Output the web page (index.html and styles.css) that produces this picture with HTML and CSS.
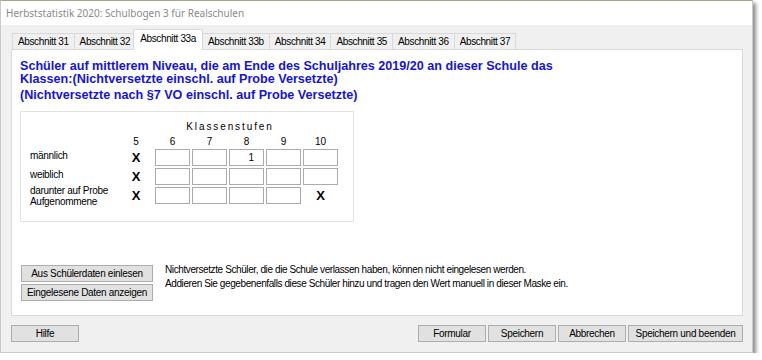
FILE: index.html
```html
<!doctype html>
<html lang="de">
  <head>
    <meta charset="UTF-8" />
    <title>Herbststatistik 2020: Schulbogen 3 für Realschulen</title>
    <link rel="stylesheet" href="styles.css">
  </head>
  <body>
    <div class="window">
      <div class="titlebar">Herbststatistik 2020: Schulbogen 3 für Realschulen</div>
      <div class="client">
        <div class="tabs">
          <div class="tab">Abschnitt 31</div>
          <div class="tab">Abschnitt 32</div>
          <div class="tab active">Abschnitt 33a</div>
          <div class="tab">Abschnitt 33b</div>
          <div class="tab">Abschnitt 34</div>
          <div class="tab">Abschnitt 35</div>
          <div class="tab">Abschnitt 36</div>
          <div class="tab">Abschnitt 37</div>
        </div>

        <div class="panel">
          <p class="heading">Schüler auf mittlerem Niveau, die am Ende des Schuljahres 2019/20 an dieser Schule das<br />Klassen:(Nichtversetzte einschl. auf Probe Versetzte)</p>
          <p class="heading sub">(Nichtversetzte nach §7 VO einschl. auf Probe Versetzte)</p>

          <div class="group">
            <div class="grid">
              <div class="caption">Klassenstufen</div>

              <div></div>
              <div class="num c5">5</div>
              <div class="num">6</div>
              <div class="num">7</div>
              <div class="num">8</div>
              <div class="num">9</div>
              <div class="num">10</div>

              <div class="label">männlich</div>
              <div class="cross c5">X</div>
              <div class="box"></div>
              <div class="box"></div>
              <div class="box">1</div>
              <div class="box"></div>
              <div class="box"></div>

              <div class="label">weiblich</div>
              <div class="cross c5">X</div>
              <div class="box"></div>
              <div class="box"></div>
              <div class="box"></div>
              <div class="box"></div>
              <div class="box"></div>

              <div class="label two">darunter auf Probe<br />Aufgenommene</div>
              <div class="cross c5">X</div>
              <div class="box"></div>
              <div class="box"></div>
              <div class="box"></div>
              <div class="box"></div>
              <div class="cross c10">X</div>
            </div>
          </div>

          <div class="import">
            <div class="import-buttons">
              <button class="btn wide">Aus Schülerdaten einlesen</button>
              <button class="btn wide">Eingelesene Daten anzeigen</button>
            </div>
            <p class="hint">Nichtversetzte Schüler, die die Schule verlassen haben, können nicht eingelesen werden.<br />Addieren Sie gegebenenfalls diese Schüler hinzu und tragen den Wert manuell in dieser Maske ein.</p>
          </div>
        </div>

        <div class="footer">
          <button class="btn small">Hilfe</button>
          <div class="actions">
            <button class="btn small">Formular</button>
            <button class="btn small">Speichern</button>
            <button class="btn small">Abbrechen</button>
            <button class="btn large">Speichern und beenden</button>
          </div>
        </div>
      </div>
    </div>
  </body>
</html>
```

FILE: styles.css
```css
body {
  margin: 0;
  background: #fff;
  font-family: 'Liberation Sans', Arial, sans-serif;
  font-size: 10px;
  color: #000;
}
.window {
  box-sizing: border-box;
  width: 753px;
  height: 353px;
  background: #f0f0f0;
  border: 1px solid #c9c9c9;
  border-top-color: #a8a890;
  box-shadow: 3px 3px 4px rgba(0, 0, 0, 0.45);
}
.titlebar {
  height: 24px;
  line-height: 24px;
  padding-left: 5px;
  background: #fff;
  color: #8a8a8a;
  font-family: 'Noto Sans', sans-serif;
  font-size: 10px;
}
.client {
  padding: 5px 9px 0 10px;
}
.tabs {
  display: flex;
  align-items: flex-end;
  height: 20px;
  padding-left: 1px;
}
.tab {
  height: 15px;
  line-height: 15px;
  padding: 0 5px;
  margin-bottom: 1px;
  background: #f0f0f0;
  border: 1px solid #d9d9d9;
  border-bottom: none;
  margin-right: -1px;
  letter-spacing: -0.37px;
}
.tab.active {
  position: relative;
  z-index: 1;
  height: 20px;
  line-height: 17px;
  margin: 0 -1px 0 -2px;
  padding: 0 6px;
  background: #fff;
}
.panel {
  box-sizing: border-box;
  height: 267px;
  margin-top: -1px;
  background: #fff;
  border: 1px solid #dadada;
  padding: 10px 8px 14px 8px;
  display: flex;
  flex-direction: column;
}
.heading {
  margin: 0;
  color: #1414d6;
  font-weight: bold;
  font-size: 12.6px;
  line-height: 13px;
}
.heading.sub {
  margin-top: 3px;
}
.group {
  width: 334px;
  box-sizing: border-box;
  margin-top: 9px;
  border: 1px solid #e2e2e2;
  padding: 9px 0 17px 9px;
}
.grid {
  display: grid;
  grid-template-columns: 96px 29px repeat(5, 37px);
  grid-template-rows: 12px 12px 17px 17px 17px;
  row-gap: 2px;
  align-items: center;
}
.caption {
  grid-column: 2 / -1;
  text-align: center;
  letter-spacing: 1.9px;
  line-height: 12px;
  padding-right: 6px;
}
.num {
  width: 35px;
  text-align: center;
}
.c5 {
  width: 20px;
}
.c10 {
  width: 35px;
}
.label {
  line-height: 12px;
  letter-spacing: -0.3px;
  margin-top: -3px;
}
.label.two {
  line-height: 11px;
  margin-top: 1px;
}
.cross {
  text-align: center;
  font-weight: bold;
  font-size: 13px;
  line-height: 17px;
}
.box {
  box-sizing: border-box;
  width: 35px;
  height: 17px;
  border: 1px solid #ababab;
  text-align: right;
  padding-right: 9px;
  line-height: 15px;
  font-size: 10px;
}
.import {
  margin-top: auto;
  display: flex;
  align-items: flex-start;
  gap: 12px;
  padding-left: 1px;
}
.import-buttons {
  display: flex;
  flex-direction: column;
  gap: 2px;
}
.hint {
  margin: -2px 0 0;
  line-height: 14px;
  letter-spacing: -0.4px;
}
.btn {
  box-sizing: border-box;
  height: 17px;
  padding: 0;
  background: #e1e1e1;
  border: 1px solid #adadad;
  font-family: 'Liberation Sans', Arial, sans-serif;
  font-size: 10px;
  letter-spacing: -0.3px;
  color: #000;
}
.btn.wide {
  width: 132px;
}
.btn.small {
  width: 68px;
}
.btn.large {
  width: 115px;
}
.footer {
  display: flex;
  justify-content: space-between;
  padding-top: 9px;
}
.actions {
  display: flex;
  gap: 2px;
}
```
